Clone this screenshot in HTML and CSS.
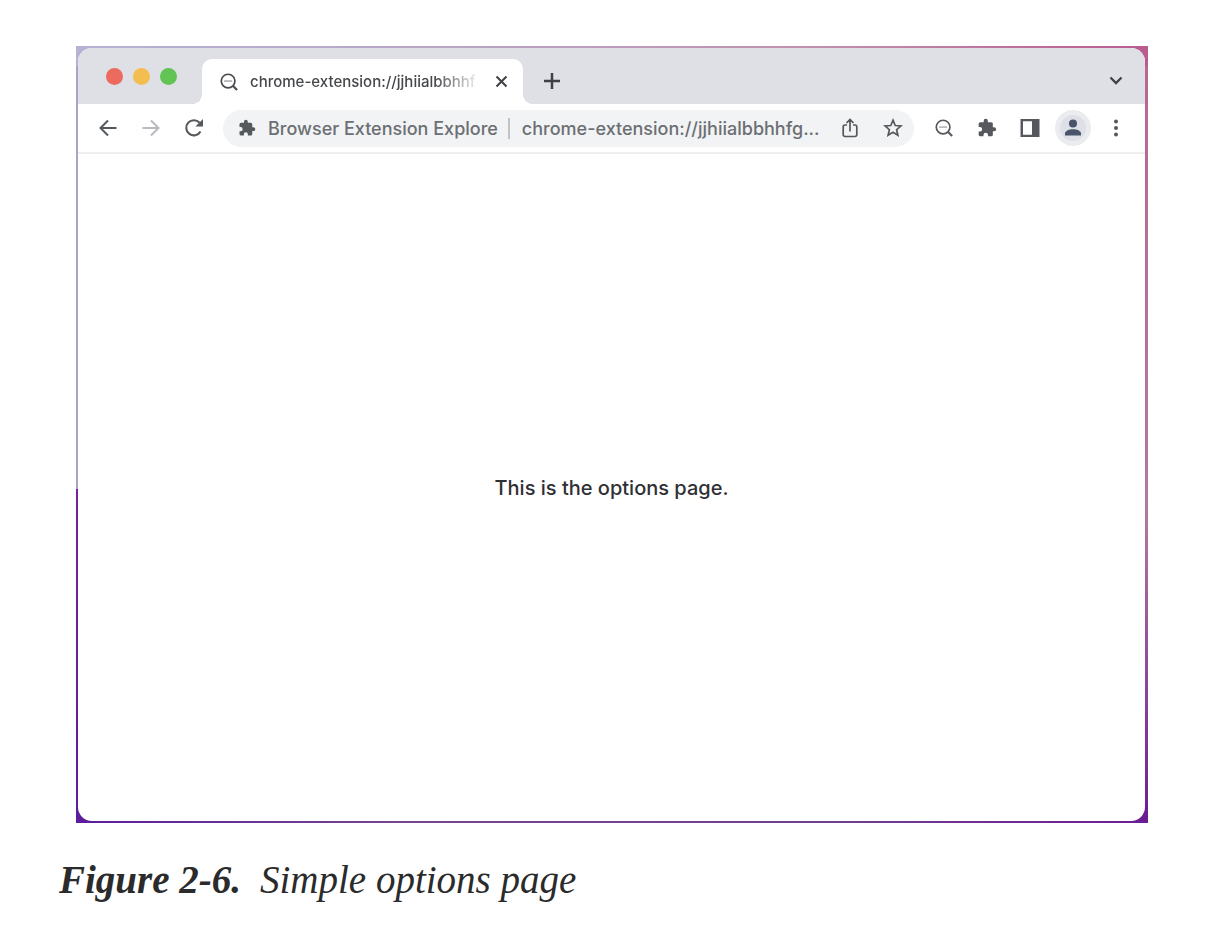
FILE: index.html
```html
<!DOCTYPE html>
<html lang="en">

<head>
  <meta charset="UTF-8">
  <meta name="viewport" content="width=device-width, initial-scale=1.0">
  <title>Simple options page</title>
  <link rel="stylesheet" href="styles.css">
</head>

<body>
  <!-- shared icons -->
  <svg class="sprite" aria-hidden="true">
    <symbol id="puzzle" viewBox="0 0 24 24">
      <path d="M20.500 11H19V7a2 2 0 0 0-2-2h-4V3.500a2.500 2.500 0 0 0-5 0V5H4a2 2 0 0 0-2 2v3.800h1.500a2.700 2.700 0 0 1 0 5.400H2V20a2 2 0 0 0 2 2h3.800v-1.500a2.700 2.700 0 0 1 5.400 0V22H17a2 2 0 0 0 2-2v-4h1.500a2.500 2.500 0 0 0 0-5z" fill="currentColor"/>
    </symbol>
    <symbol id="lens" viewBox="0 0 20 20">
      <circle cx="9" cy="9" r="7.600" fill="none" stroke="currentColor" stroke-width="1.900"/>
      <path d="M14.200 14.200l4.800 4.800" stroke="currentColor" stroke-width="2.400"/>
      <path d="M4.500 9h9" stroke="currentColor" stroke-width="2" opacity=".4"/>
    </symbol>
  </svg>

  <figure class="figure">
    <div class="desktop">
      <div class="window">
        <div class="tab-strip">
          <div class="lights">
            <span class="light red"></span>
            <span class="light yellow"></span>
            <span class="light green"></span>
          </div>
          <div class="tab">
            <svg class="tab-icon"><use href="#lens"/></svg>
            <span class="tab-title">chrome-extension://jjhiialbbhhf</span>
            <button class="tab-close" aria-label="Close tab">
              <svg width="13" height="13" viewBox="0 0 13 13"><path d="M1.500 1.500l10 10M11.500 1.500l-10 10" stroke="currentColor" stroke-width="2"/></svg>
            </button>
          </div>
          <button class="new-tab" aria-label="New tab">
            <svg width="18" height="18" viewBox="0 0 18 18"><path d="M9 1v16M1 9h16" stroke="currentColor" stroke-width="2.500"/></svg>
          </button>
          <button class="tab-search" aria-label="Search tabs">
            <svg width="14" height="10" viewBox="0 0 14 10"><path d="M1.500 1.500L7 7l5.500-5.500" fill="none" stroke="currentColor" stroke-width="2.300"/></svg>
          </button>
        </div>

        <div class="toolbar">
          <div class="buttons">
            <button aria-label="Back">
              <svg width="18" height="18" viewBox="0 0 18 18"><path d="M17.500 9H2M9 1.500L1.500 9 9 16.500" fill="none" stroke="currentColor" stroke-width="2"/></svg>
            </button>
            <button class="disabled" aria-label="Forward">
              <svg width="18" height="18" viewBox="0 0 18 18"><path d="M.5 9H16M9 1.500L16.500 9 9 16.500" fill="none" stroke="currentColor" stroke-width="2"/></svg>
            </button>
            <button aria-label="Reload">
              <svg width="20" height="20" viewBox="0 0 20 20"><path d="M16.500 13.500A7.600 7.600 0 1 1 15.600 4.800" fill="none" stroke="currentColor" stroke-width="2.100"/><path d="M19 1v7.600h-7.600z" fill="currentColor"/></svg>
            </button>
          </div>

          <div class="omnibox">
            <svg class="site-icon"><use href="#puzzle"/></svg>
            <label class="site-name" for="address">Browser Extension Explore</label>
            <input class="address" id="address" type="text" value="chrome-extension://jjhiialbbhhfg...">
            <div class="buttons">
              <button aria-label="Share">
                <svg width="16" height="20" viewBox="0 0 16 20"><path d="M5 7H3a1.800 1.800 0 0 0-1.800 1.800v7.900A1.800 1.800 0 0 0 3 18.500h10a1.800 1.800 0 0 0 1.800-1.800V8.800A1.800 1.800 0 0 0 13 7h-2M8 13.500V2M4.500 5L8 1.500 11.500 5" fill="none" stroke="currentColor" stroke-width="1.700"/></svg>
              </button>
              <button aria-label="Bookmark">
                <svg width="20" height="20" viewBox="0 0 20 20"><path d="M10 2.200l2.200 5.300 5.700.5-4.300 3.700 1.300 5.600-4.900-3-4.900 3 1.300-5.600L2.100 8l5.700-.5z" fill="none" stroke="currentColor" stroke-width="1.700"/></svg>
              </button>
            </div>
          </div>

          <div class="buttons">
            <button aria-label="Browser Extension Explore">
              <svg width="18" height="18"><use href="#lens"/></svg>
            </button>
            <button aria-label="Extensions">
              <svg width="20" height="20"><use href="#puzzle"/></svg>
            </button>
            <button aria-label="Side panel">
              <svg width="20" height="20" viewBox="0 0 20 20"><path d="M.5 1h19v18H.5zM3 3.300v13.400h9V3.300z" fill="currentColor" fill-rule="evenodd"/></svg>
            </button>
            <button class="profile" aria-label="Profile">
              <svg width="36" height="36" viewBox="0 0 36 36"><circle cx="18" cy="18" r="18" fill="#ebecef"/><circle cx="18" cy="18" r="13" fill="#dde0e7"/><circle cx="18" cy="13.500" r="4" fill="currentColor"/><path d="M10 25.500v-2c0-2.800 4.500-4.300 8-4.300s8 1.500 8 4.300v2z" fill="currentColor"/></svg>
            </button>
            <button aria-label="Menu">
              <svg width="6" height="18" viewBox="0 0 6 18"><circle cx="3" cy="2.500" r="2" fill="currentColor"/><circle cx="3" cy="9" r="2" fill="currentColor"/><circle cx="3" cy="15.500" r="2" fill="currentColor"/></svg>
            </button>
          </div>
        </div>

        <main class="content">
          <p>This is the options page.</p>
        </main>
      </div>
    </div>
    <figcaption><strong>Figure 2-6.</strong><span>Simple options page</span></figcaption>
  </figure>
</body>
</html>
```
FILE: styles.css
```css
* {
  box-sizing: border-box;
}

body {
  margin: 0;
  background-color: #fff;
  font-family: Inter, Arial, sans-serif;
  font-weight: 500;
}

.sprite {
  display: none;
}

.figure {
  margin: 0;
  padding: 46px 59px 0;
}

/* the wallpaper shows as a thin edge round the window */
.desktop {
  margin: 0 25px 0 17px;
  padding: 2px 3px 2px 2px;
  background:
    linear-gradient(to right, #b5b2d3, #b9a5c4 35%, #c08fae 70%, #b95c90) top / 100% 20px no-repeat,
    linear-gradient(to right, #5c1c9c, #75458f 30%, #704090 70%, #6c1d94) bottom / 100% 20px no-repeat,
    linear-gradient(#aba3c6 57%, #7422a0 57%, #5c1c9c) left / 50% 100% no-repeat,
    linear-gradient(#b8688f, #b07aa0 60%, #6c1d94) right / 50% 100% no-repeat;
}

.window {
  border-radius: 14px;
  background-color: #fff;
  overflow: hidden;
}

button {
  display: flex;
  align-items: center;
  justify-content: center;
  padding: 0;
  border: none;
  background: none;
  color: #55585c;
  cursor: pointer;
}

/* tab strip */
.tab-strip {
  display: flex;
  align-items: center;
  height: 56px;
  padding-right: 8px;
  background-color: #dfe0e5;
}

.lights {
  display: flex;
  align-self: flex-start;
  gap: 10px;
  width: 124px;
  padding: 20px 0 0 28px;
}

.light {
  width: 17px;
  height: 17px;
  border-radius: 50%;
}

.red {
  background-color: #ec6a5e;
}

.yellow {
  background-color: #f4bd4f;
}

.green {
  background-color: #61c454;
}

.tab {
  position: relative;
  display: flex;
  align-items: center;
  align-self: flex-end;
  width: 321px;
  height: 45px;
  padding: 0 10px 0 18px;
  border-radius: 10px 10px 0 0;
  background-color: #fff;
}

/* curved feet of the tab */
.tab::before,
.tab::after {
  content: "";
  position: absolute;
  bottom: 0;
  width: 10px;
  height: 10px;
}

.tab::before {
  right: 100%;
  background: radial-gradient(circle at 0 0, transparent 10px, #fff 10px);
}

.tab::after {
  left: 100%;
  background: radial-gradient(circle at 100% 0, transparent 10px, #fff 10px);
}

.tab-icon {
  width: 18px;
  height: 18px;
  margin-right: 12px;
  color: #4a4c50;
}

.tab-title {
  flex: 1;
  overflow: hidden;
  white-space: nowrap;
  font-size: 15px;
  color: #45474a;
  -webkit-mask-image: linear-gradient(to right, #000 80%, transparent);
  mask-image: linear-gradient(to right, #000 80%, transparent);
}

.tab-close {
  width: 24px;
  height: 24px;
  margin-left: 8px;
}

.new-tab {
  width: 36px;
  height: 36px;
  margin: 10px 0 0 11px;
}

.tab-search {
  width: 43px;
  height: 36px;
  margin: 10px 0 0 auto;
}

.tab-close,
.new-tab,
.tab-search {
  color: #3f4145;
}

/* toolbar */
.toolbar {
  display: flex;
  align-items: center;
  gap: 8px;
  height: 50px;
  padding: 0 8px;
  border-bottom: 2px solid #eeeef0;
}

.buttons {
  display: flex;
}

.buttons button {
  width: 43px;
  height: 37px;
}

.buttons .disabled {
  color: #b8babd;
}

.buttons .profile {
  color: #49546b;
}

.omnibox {
  display: flex;
  flex: 1;
  align-items: center;
  min-width: 0;
  height: 37px;
  padding-left: 15px;
  border-radius: 19px;
  background-color: #f1f3f4;
}

.site-icon {
  width: 18px;
  height: 18px;
  margin-right: 12px;
  color: #55585c;
}

.site-name,
.address {
  font-family: inherit;
  font-size: 18px;
  font-weight: 500;
  color: #6c6f73;
}

.site-name {
  padding-right: 10px;
  border-right: 2px solid #c0c2c5;
  white-space: nowrap;
}

.address {
  flex: 1;
  min-width: 0;
  margin-left: 12px;
  padding: 0;
  border: none;
  outline: none;
  background: none;
}

/* options page */
.content {
  display: flex;
  align-items: center;
  justify-content: center;
  min-height: 667px;
}

.content p {
  margin: 0;
  font-size: 20px;
  color: #2f3033;
}

figcaption {
  display: flex;
  gap: 19px;
  margin-top: 35px;
  font-family: "Liberation Serif", "Times New Roman", serif;
  font-size: 39px;
  font-style: italic;
  font-weight: 400;
  line-height: 44px;
  color: #2b2b2b;
}
```
